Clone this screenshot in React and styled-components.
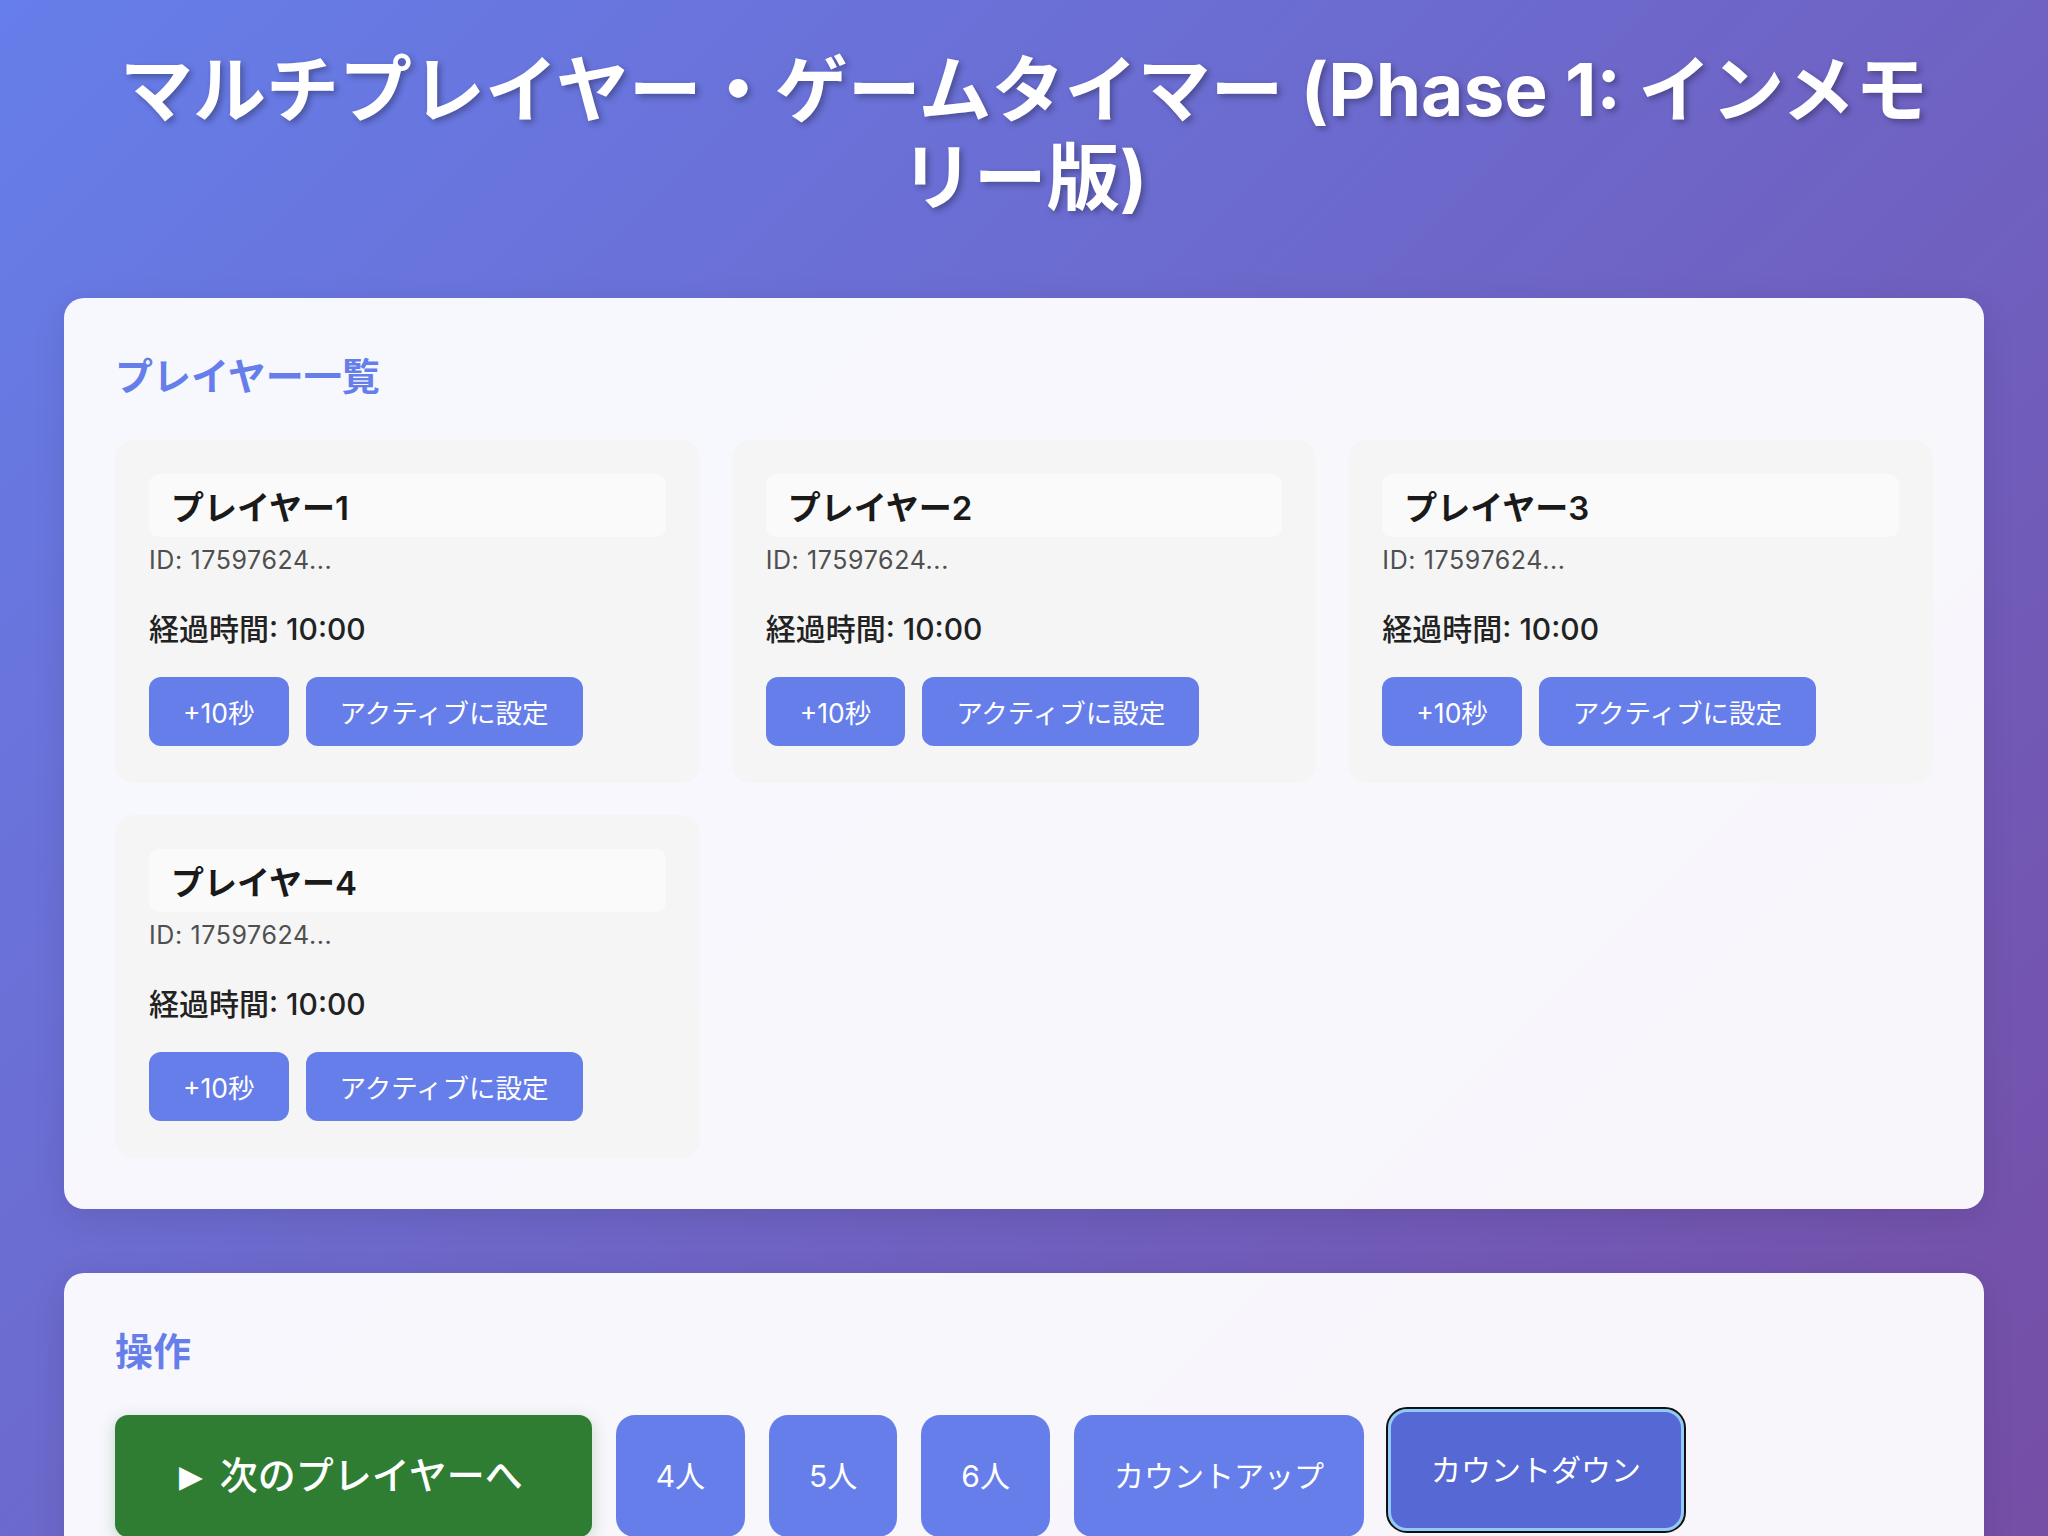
import React from "react";
import styled, { createGlobalStyle } from "styled-components";

const players = [
  { id: 1, name: "プレイヤー1" },
  { id: 2, name: "プレイヤー2" },
  { id: 3, name: "プレイヤー3" },
  { id: 4, name: "プレイヤー4" },
];

const App = () => {
  return (
    <Page>
      <GlobalStyle />
      <Title>マルチプレイヤー・ゲームタイマー (Phase 1: インメモリー版)</Title>

      <Panel>
        <SectionTitle>プレイヤー一覧</SectionTitle>
        <PlayerGrid>
          {players.map((p) => (
            <PlayerCard key={p.id}>
              <NameInput defaultValue={p.name} />
              <PlayerId>ID: 17597624...</PlayerId>
              <Elapsed>経過時間: 10:00</Elapsed>
              <ButtonRow>
                <SmallButton>+10秒</SmallButton>
                <SmallButton>アクティブに設定</SmallButton>
              </ButtonRow>
            </PlayerCard>
          ))}
        </PlayerGrid>
      </Panel>

      <Panel>
        <SectionTitle>操作</SectionTitle>
        <Controls>
          <NextButton>
            <PlayMark>▶</PlayMark>次のプレイヤーへ
          </NextButton>
          <ControlButton>4人</ControlButton>
          <ControlButton>5人</ControlButton>
          <ControlButton>6人</ControlButton>
          <ControlButton>カウントアップ</ControlButton>
          <ControlButton $active>カウントダウン</ControlButton>
        </Controls>
      </Panel>
    </Page>
  );
};

const GlobalStyle = createGlobalStyle`
  body {
    margin: 0;
    font-family: Inter, "Noto Sans CJK JP", sans-serif;
  }
  * {
    box-sizing: border-box;
  }
`;

const Page = styled.main`
  min-height: 100vh;
  background: linear-gradient(135deg, #667eea 0%, #764ba2 100%);
  padding: 46px 64px 64px;
`;

const Title = styled.h1`
  max-width: 1830px;
  margin: 0 auto 77px;
  color: #fff;
  font-size: 73px;
  font-weight: 700;
  line-height: 1.2;
  text-align: center;
  text-shadow: 3px 3px 6px rgba(0, 0, 0, 0.3);
`;

const Panel = styled.section`
  background: rgba(255, 255, 255, 0.95);
  border-radius: 20px;
  padding: 51px;
  margin-bottom: 64px;
  box-shadow: 0 8px 32px rgba(0, 0, 0, 0.1);
`;

const SectionTitle = styled.h2`
  margin: 0 0 36px;
  color: #667eea;
  font-size: 38px;
  font-weight: 700;
  line-height: 1.45;
`;

const PlayerGrid = styled.div`
  display: grid;
  grid-template-columns: repeat(3, 1fr);
  gap: 32px;
`;

const PlayerCard = styled.div`
  background: #f5f5f5;
  border-radius: 19px;
  padding: 34px 34px 37px;
`;

const NameInput = styled.input`
  display: block;
  width: 100%;
  height: 63px;
  padding: 0 22px;
  border: none;
  border-radius: 10px;
  background: #fafafa;
  color: #1a1a1a;
  font-family: inherit;
  font-size: 33px;
  font-weight: 600;
  outline: none;
`;

const PlayerId = styled.div`
  margin-top: 6px;
  color: #4f4f4f;
  font-size: 25px;
  letter-spacing: 0.6px;
  line-height: 1.4;
`;

const Elapsed = styled.div`
  margin-top: 30px;
  color: #222;
  font-size: 30px;
  font-weight: 500;
  line-height: 1.4;
`;

const ButtonRow = styled.div`
  display: flex;
  gap: 17px;
  margin-top: 27px;
`;

const SmallButton = styled.button`
  height: 69px;
  padding: 0 34px;
  border: none;
  border-radius: 12px;
  background: #667eea;
  color: #fff;
  font-family: inherit;
  font-size: 26.5px;
  cursor: pointer;
`;

const Controls = styled.div`
  display: flex;
  align-items: stretch;
  gap: 24px;
`;

const NextButton = styled.button`
  display: flex;
  align-items: center;
  padding: 38px 69px 38px 64px;
  border: none;
  border-radius: 13px;
  background: #2e7d32;
  color: #fff;
  font-family: inherit;
  font-size: 38px;
  font-weight: 500;
  line-height: 1.2;
  box-shadow: 0 4px 16px rgba(46, 125, 50, 0.25);
  cursor: pointer;
`;

const PlayMark = styled.span`
  margin-right: 17px;
  font-family: "DejaVu Sans", sans-serif;
  font-size: 31px;
`;

const ControlButton = styled.button`
  padding: 0 40px;
  border: ${(p) => (p.$active ? "3px solid #90caf9" : "none")};
  border-radius: 19px;
  background: ${(p) => (p.$active ? "#5568d3" : "#667eea")};
  color: #fff;
  font-family: inherit;
  font-size: 30px;
  line-height: 1.2;
  cursor: pointer;
  outline: ${(p) => (p.$active ? "2px solid #111" : "none")};
  transform: ${(p) => (p.$active ? "translateY(-6px)" : "none")};
`;

export default App;
